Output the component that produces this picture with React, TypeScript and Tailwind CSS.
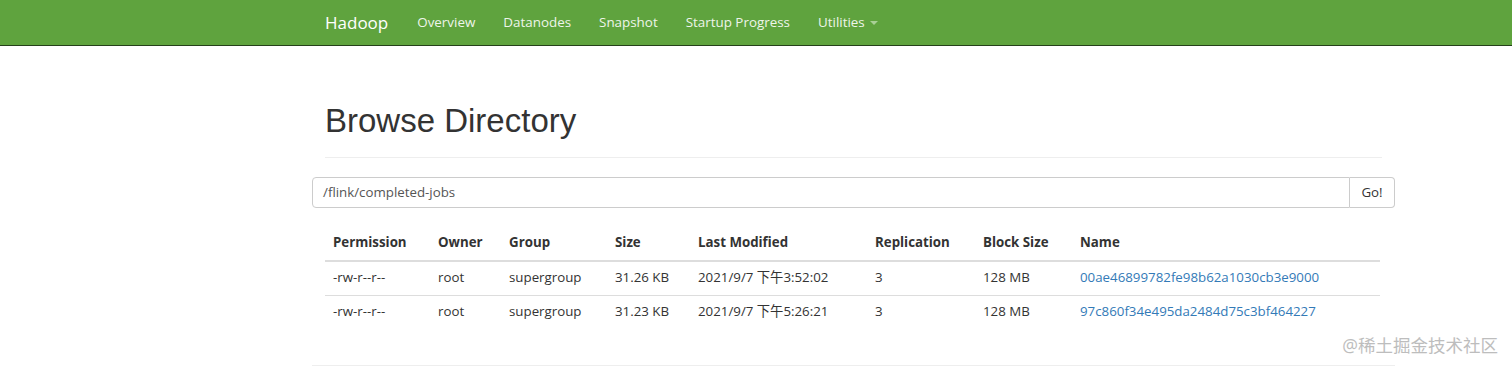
const rows = [
  {
    permission: '-rw-r--r--',
    owner: 'root',
    group: 'supergroup',
    size: '31.26 KB',
    modified: '2021/9/7 下午3:52:02',
    replication: '3',
    blockSize: '128 MB',
    name: '00ae46899782fe98b62a1030cb3e9000',
  },
  {
    permission: '-rw-r--r--',
    owner: 'root',
    group: 'supergroup',
    size: '31.23 KB',
    modified: '2021/9/7 下午5:26:21',
    replication: '3',
    blockSize: '128 MB',
    name: '97c860f34e495da2484d75c3bf464227',
  },
];

const headers = ['Permission', 'Owner', 'Group', 'Size', 'Last Modified', 'Replication', 'Block Size', 'Name'];
const widths = ['w-[105px]', 'w-[71px]', 'w-[106px]', 'w-[83px]', 'w-[177px]', 'w-[108px]', 'w-[97px]', ''];

const body = { fontFamily: '"Open Sans", "Noto Sans CJK SC", sans-serif' };

export default function App() {
  return (
    <div className="relative h-[368px] w-[1512px] overflow-hidden bg-white text-[#333]" style={body}>
      <nav className="h-[46px] border-b border-[#25401a] bg-[#5fa33e]">
        <div className="ml-[312px] flex h-full items-center text-[13.4px] text-[#eef5ea]">
          <span className="px-[13px] text-[17px] text-white">Hadoop</span>
          <div className="ml-[2px] flex items-center">
            <span className="px-[14px]">Overview</span>
            <span className="px-[14px]">Datanodes</span>
            <span className="px-[14px]">Snapshot</span>
            <span className="px-[14px]">Startup Progress</span>
            <span className="flex items-center px-[14px]">
              Utilities
              <span className="ml-[5px] mt-[2px] h-0 w-0 border-x-[4px] border-t-[4px] border-x-transparent border-t-[#a9cf96]" />
            </span>
          </div>
        </div>
      </nav>

      <div className="ml-[312px] w-[1083px]">
        <div className="mx-[13px] mt-[56px] border-b border-[#eee] pb-[17px]">
          <h1
            className="text-[33px] leading-[38px] text-[#333]"
            style={{ fontFamily: '"Liberation Sans", Arial, sans-serif' }}
          >
            Browse Directory
          </h1>
        </div>

        <div className="mt-[19px] flex h-[31px]">
          <div className="flex flex-1 items-center rounded-l-[4px] border border-[#ccc] px-[10px] text-[13.3px] text-[#555]">
            /flink/completed-jobs
          </div>
          <div className="flex w-[45px] items-center justify-center rounded-r-[4px] border border-l-0 border-[#ccc] text-[13.3px] text-[#333]">
            Go!
          </div>
        </div>

        <table className="mx-[13px] mt-[18px] w-[1055px] border-collapse text-left text-[13.3px]">
          <thead>
            <tr className="border-b-2 border-[#ddd]">
              {headers.map((h, i) => (
                <th key={h} className={`h-[35px] px-[8px] font-bold ${widths[i]}`}>
                  {h}
                </th>
              ))}
            </tr>
          </thead>
          <tbody>
            {rows.map((r) => (
              <tr key={r.name} className="border-t border-[#ddd]">
                <td className="h-[34px] px-[8px]">{r.permission}</td>
                <td className="px-[8px]">{r.owner}</td>
                <td className="px-[8px]">{r.group}</td>
                <td className="px-[8px]">{r.size}</td>
                <td className="px-[8px]">{r.modified}</td>
                <td className="px-[8px]">{r.replication}</td>
                <td className="px-[8px]">{r.blockSize}</td>
                <td className="px-[8px] text-[#337ab7]">{r.name}</td>
              </tr>
            ))}
          </tbody>
        </table>

        <div className="mt-[36px] border-t border-[#eee]" />
      </div>

      <div className="absolute right-[14px] top-[332px] text-[17.5px] text-[#bdbdbd]">@稀土掘金技术社区</div>
    </div>
  );
}
